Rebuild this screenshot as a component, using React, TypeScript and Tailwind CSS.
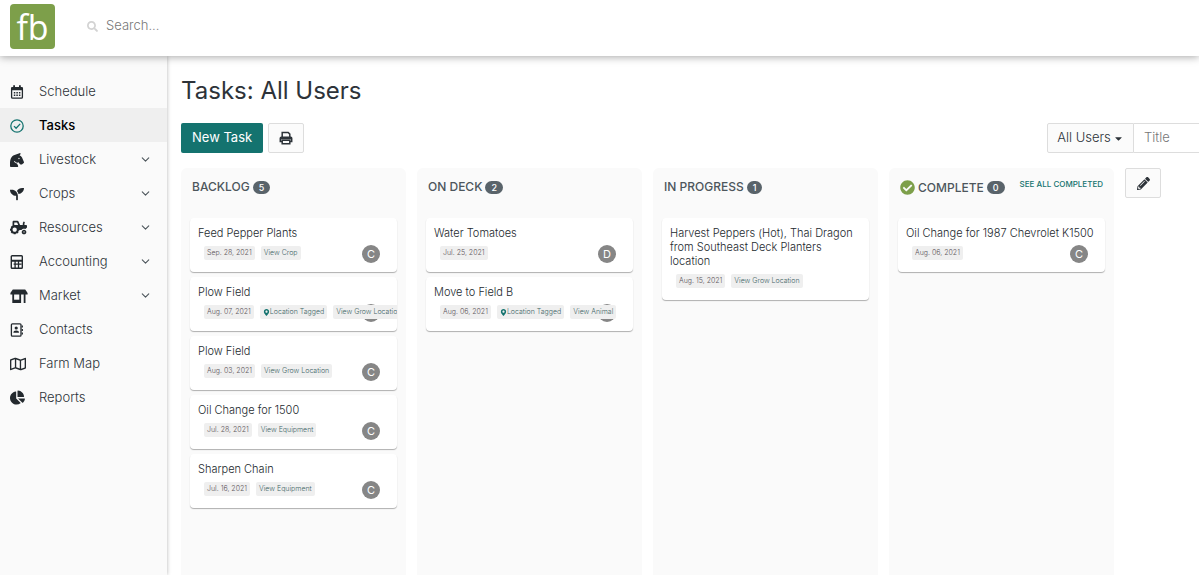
import React, { useState } from 'react';
import {
    FaHorseHead, FaSeedling, FaTractor, FaStoreAlt, FaRegMap, FaChartPie,
    FaSearch, FaCheckCircle, FaMapMarkerAlt, FaPencilAlt, FaCaretDown,
} from 'react-icons/fa';
import { ChevronDown } from 'lucide-react';
import clsx from 'clsx';

interface Task {
    title: string;
    date: string;
    tagged?: boolean;
    link?: string;
    user?: string;
}

interface Column {
    name: string;
    count: number;
    complete?: boolean;
    tasks: Task[];
}

const CalendarIcon = () => (
    <svg viewBox="0 0 14 14" className="size-3.5" fill="none" stroke="currentColor">
        <rect x="1.6" y="2.6" width="10.8" height="10.6" rx="1" strokeWidth="1.3" />
        <path d="M1 2.4h12v2.8H1zM3.2 0.2h1.8v2.4H3.2zM9 0.2h1.8v2.4H9z" fill="currentColor" stroke="none" />
        <path d="M3.8 7.7h6.6M3.8 10.3h6.6" strokeWidth="1.5" strokeDasharray="1.5 1.05" />
    </svg>
);

const CheckIcon = () => (
    <svg viewBox="0 0 14 14" className="size-3.5 text-[#14736f]" fill="none" stroke="currentColor" strokeWidth="1.3">
        <circle cx="7" cy="7" r="6.2" />
        <path d="M4 7.1l2.1 2.2 4.1-4.4" />
    </svg>
);

const CalculatorIcon = () => (
    <svg viewBox="0 0 14 14" className="size-3.5" fill="none" stroke="currentColor" strokeWidth="1.4">
        <rect x="1.3" y="0.8" width="11" height="12.4" rx="0.8" />
        <path d="M1.3 5.4h11M1.3 6h11M3.6 9.2h8M5.1 6v7M8.5 6v7" strokeWidth="1.3" />
    </svg>
);

const ContactsIcon = () => (
    <svg viewBox="0 0 14 14" className="size-3.5" fill="none" stroke="currentColor">
        <rect x="1.4" y="0.8" width="9.6" height="12.4" rx="1" strokeWidth="1.3" />
        <circle cx="6.2" cy="5" r="1.6" fill="currentColor" stroke="none" />
        <path d="M3.4 9.8q0-2.3 2.8-2.3T9 9.8z" fill="currentColor" stroke="none" />
        <path d="M12.3 2.6v2M12.3 6v2M12.3 9.4v2" strokeWidth="1.3" />
    </svg>
);

/* Awning, open counter on the left, door post on the right */
const MarketIcon = () => (
    <svg viewBox="0 0 18 14" className="h-3.5 w-[18px]" fill="none" stroke="currentColor" strokeWidth="1.8">
        <path d="M2.8 0.4h12.4L17.6 4v1.4H0.4V4z" fill="currentColor" stroke="none" />
        <path d="M3.2 5v8h7V5" />
        <path d="M3.2 11.6h7" />
        <path d="M14.6 5v9" />
    </svg>
);

const PrintIcon = () => (
    <svg viewBox="0 0 14 14" className="size-3.5" fill="none" stroke="currentColor" strokeWidth="1.5">
        <path d="M3.2 6V1.5h6l1.6 1.6V6" />
        <path d="M3 10.4H1.3V7.2q0-1 1-1h9.4q1 0 1 1v3.2H11" />
        <path d="M1.3 6h11.4v2.4H1.3z" fill="currentColor" stroke="none" />
        <path d="M3.2 9.2h7.6v3.6H3.2z" />
    </svg>
);

const NAV = [
    { label: 'Schedule', icon: <CalendarIcon /> },
    { label: 'Tasks', icon: <CheckIcon />, active: true },
    { label: 'Livestock', icon: <FaHorseHead size={14} />, more: true },
    { label: 'Crops', icon: <FaSeedling size={14} />, more: true },
    { label: 'Resources', icon: <FaTractor size={17} />, more: true },
    { label: 'Accounting', icon: <CalculatorIcon />, more: true },
    { label: 'Market', icon: <MarketIcon />, more: true },
    { label: 'Contacts', icon: <ContactsIcon /> },
    { label: 'Farm Map', icon: <FaRegMap size={16} /> },
    { label: 'Reports', icon: <FaChartPie size={15} /> },
];

const COLUMNS: Column[] = [
    {
        name: 'BACKLOG', count: 5, tasks: [
            { title: 'Feed Pepper Plants', date: 'Sep. 28, 2021', link: 'View Crop', user: 'C' },
            { title: 'Plow Field', date: 'Aug. 07, 2021', tagged: true, link: 'View Grow Location', user: 'C' },
            { title: 'Plow Field', date: 'Aug. 03, 2021', link: 'View Grow Location', user: 'C' },
            { title: 'Oil Change for 1500', date: 'Jul. 28, 2021', link: 'View Equipment', user: 'C' },
            { title: 'Sharpen Chain', date: 'Jul. 16, 2021', link: 'View Equipment', user: 'C' },
        ],
    },
    {
        name: 'ON DECK', count: 2, tasks: [
            { title: 'Water Tomatoes', date: 'Jul. 25, 2021', user: 'D' },
            { title: 'Move to Field B', date: 'Aug. 06, 2021', tagged: true, link: 'View Animal', user: 'C' },
        ],
    },
    {
        name: 'IN PROGRESS', count: 1, tasks: [
            { title: 'Harvest Peppers (Hot), Thai Dragon from Southeast Deck Planters location', date: 'Aug. 15, 2021', link: 'View Grow Location' },
        ],
    },
    {
        name: 'COMPLETE', count: 0, complete: true, tasks: [
            { title: 'Oil Change for 1987 Chevrolet K1500', date: 'Aug. 06, 2021', user: 'C' },
        ],
    },
];

const tag = 'relative z-10 h-3.5 px-[3px] rounded-xs bg-[#efefef] text-[7px] leading-[14px] whitespace-nowrap shrink-0';

const TaskCard: React.FC<{ task: Task }> = ({ task }) => (
    <article className="relative overflow-hidden rounded bg-white pt-2 pb-3 pl-2 shadow-[0_1px_1px_rgba(0,0,0,0.3)]">
        <h3 className="pr-2 text-[11px] leading-[14px] font-light text-[#23292e]">{task.title}</h3>
        <div className="mt-1.5 ml-1.5 flex gap-1.5">
            <span className={clsx(tag, 'font-light text-[#5c5459]')}>{task.date}</span>
            {task.tagged && (
                <span className={clsx(tag, 'flex items-center font-light text-[#3f6667]')}>
                    <FaMapMarkerAlt size={7} className="text-[#14736f]" />
                    Location Tagged
                </span>
            )}
            {task.link && <a href="#" className={clsx(tag, 'font-light text-[#3f6667]')}>{task.link}</a>}
        </div>
        {task.user && (
            <span className="absolute right-[17px] bottom-[9px] flex size-[18px] items-center justify-center rounded-full bg-[#868686] text-[11px] text-white">
                {task.user}
            </span>
        )}
    </article>
);

const BoardColumn: React.FC<{ column: Column }> = ({ column }) => (
    <section className="w-[225px] shrink-0 rounded-t-md bg-[#fafafa] px-[9px]">
        <header className="flex h-[50px] items-start justify-between pt-3 pr-0.5 pl-0.5">
            <h2 className="flex items-center gap-[3px] text-[12px] leading-[14px] font-medium whitespace-nowrap text-[#4d565c]">
                {column.complete && <FaCheckCircle size={15} className="text-[#7d9f4a]" />}
                {column.name}
                <span className="h-[13px] rounded-full bg-[#59636a] px-1.5 text-[9px] leading-[13px] text-white">{column.count}</span>
            </h2>
            {column.complete && (
                <a href="#" className="text-[8px] leading-[8px] font-medium whitespace-nowrap text-[#14736f]">SEE ALL COMPLETED</a>
            )}
        </header>
        <div className="flex flex-col gap-[5px]">
            {column.tasks.map((t, i) => <TaskCard key={i} task={t} />)}
        </div>
    </section>
);

export default function App() {
    const [query, setQuery] = useState('');
    const [title, setTitle] = useState('');

    return (
        <div className="flex min-h-screen flex-col overflow-hidden bg-white font-['Inter',sans-serif] text-[13px] text-[#2d3339]">
            <header className="relative z-20 flex h-14 shrink-0 items-start bg-white pt-1 pl-2.5 shadow-[0_1px_8px_rgba(0,0,0,0.35)]">
                <a href="#" className="flex size-[45px] items-center justify-center rounded bg-[#7d9f4a] font-['Open_Sans',sans-serif] text-[34px] leading-none font-medium text-white">
                    fb
                </a>
                <label className="ml-8 flex h-11 items-center gap-2">
                    <FaSearch size={11} className="text-[#d3d3d3]" />
                    <input
                        aria-label="Search"
                        placeholder="Search..."
                        value={query}
                        onChange={e => setQuery(e.target.value)}
                        className="w-40 font-light outline-none placeholder:text-[#777]"
                    />
                </label>
            </header>

            <div className="flex flex-1">
                <nav className="relative z-10 w-[167px] shrink-0 bg-[#fafafa] pt-[18px] shadow-[0_0_4px_rgba(0,0,0,0.3)]">
                    {NAV.map(item => (
                        <a
                            key={item.label}
                            href="#"
                            className={clsx(
                                'flex h-[34px] items-center pt-px pr-[15px] pl-2.5',
                                item.active ? 'bg-[#efefef] font-medium text-black' : 'font-light',
                            )}
                        >
                            <span className="flex w-[29px] text-[#23292e]">{item.icon}</span>
                            <span className="flex-1">{item.label}</span>
                            {item.more && <ChevronDown size={13} strokeWidth={2} className="text-[#4d565c]" />}
                        </a>
                    ))}
                </nav>

                <main className="flex min-w-0 flex-1 flex-col overflow-hidden pt-[21px] pl-3.5">
                    <h1 className="text-2xl leading-7">Tasks: All Users</h1>
                    <div className="mt-[18px] flex justify-between">
                        <div className="flex gap-[5px]">
                            <button className="h-[30px] rounded-xs bg-[#14736f] px-[11px] text-white">New Task</button>
                            <button aria-label="Print" className="flex h-[30px] w-9 items-center justify-center rounded-xs border border-[#ddd] bg-[#fbfbfb]">
                                <PrintIcon />
                            </button>
                        </div>
                        <div className="flex h-[30px]">
                            <button className="flex w-[87px] items-center justify-center gap-0.5 rounded-l-xs border border-[#ddd] bg-[#fbfbfb] font-light">
                                All Users <FaCaretDown size={11} />
                            </button>
                            <input
                                aria-label="Title"
                                placeholder="Title"
                                value={title}
                                onChange={e => setTitle(e.target.value)}
                                className="w-[65px] border-y border-[#ddd] px-2.5 font-light outline-none placeholder:text-[#777]"
                            />
                        </div>
                    </div>
                    <div className="mt-[15px] flex flex-1 gap-[11px]">
                        {COLUMNS.map(c => <BoardColumn key={c.name} column={c} />)}
                        <button aria-label="Edit columns" className="flex h-[30px] w-9 shrink-0 items-center justify-center rounded-xs border border-[#ddd] bg-[#fbfbfb]">
                            <FaPencilAlt size={13} />
                        </button>
                    </div>
                </main>
            </div>
        </div>
    );
}
